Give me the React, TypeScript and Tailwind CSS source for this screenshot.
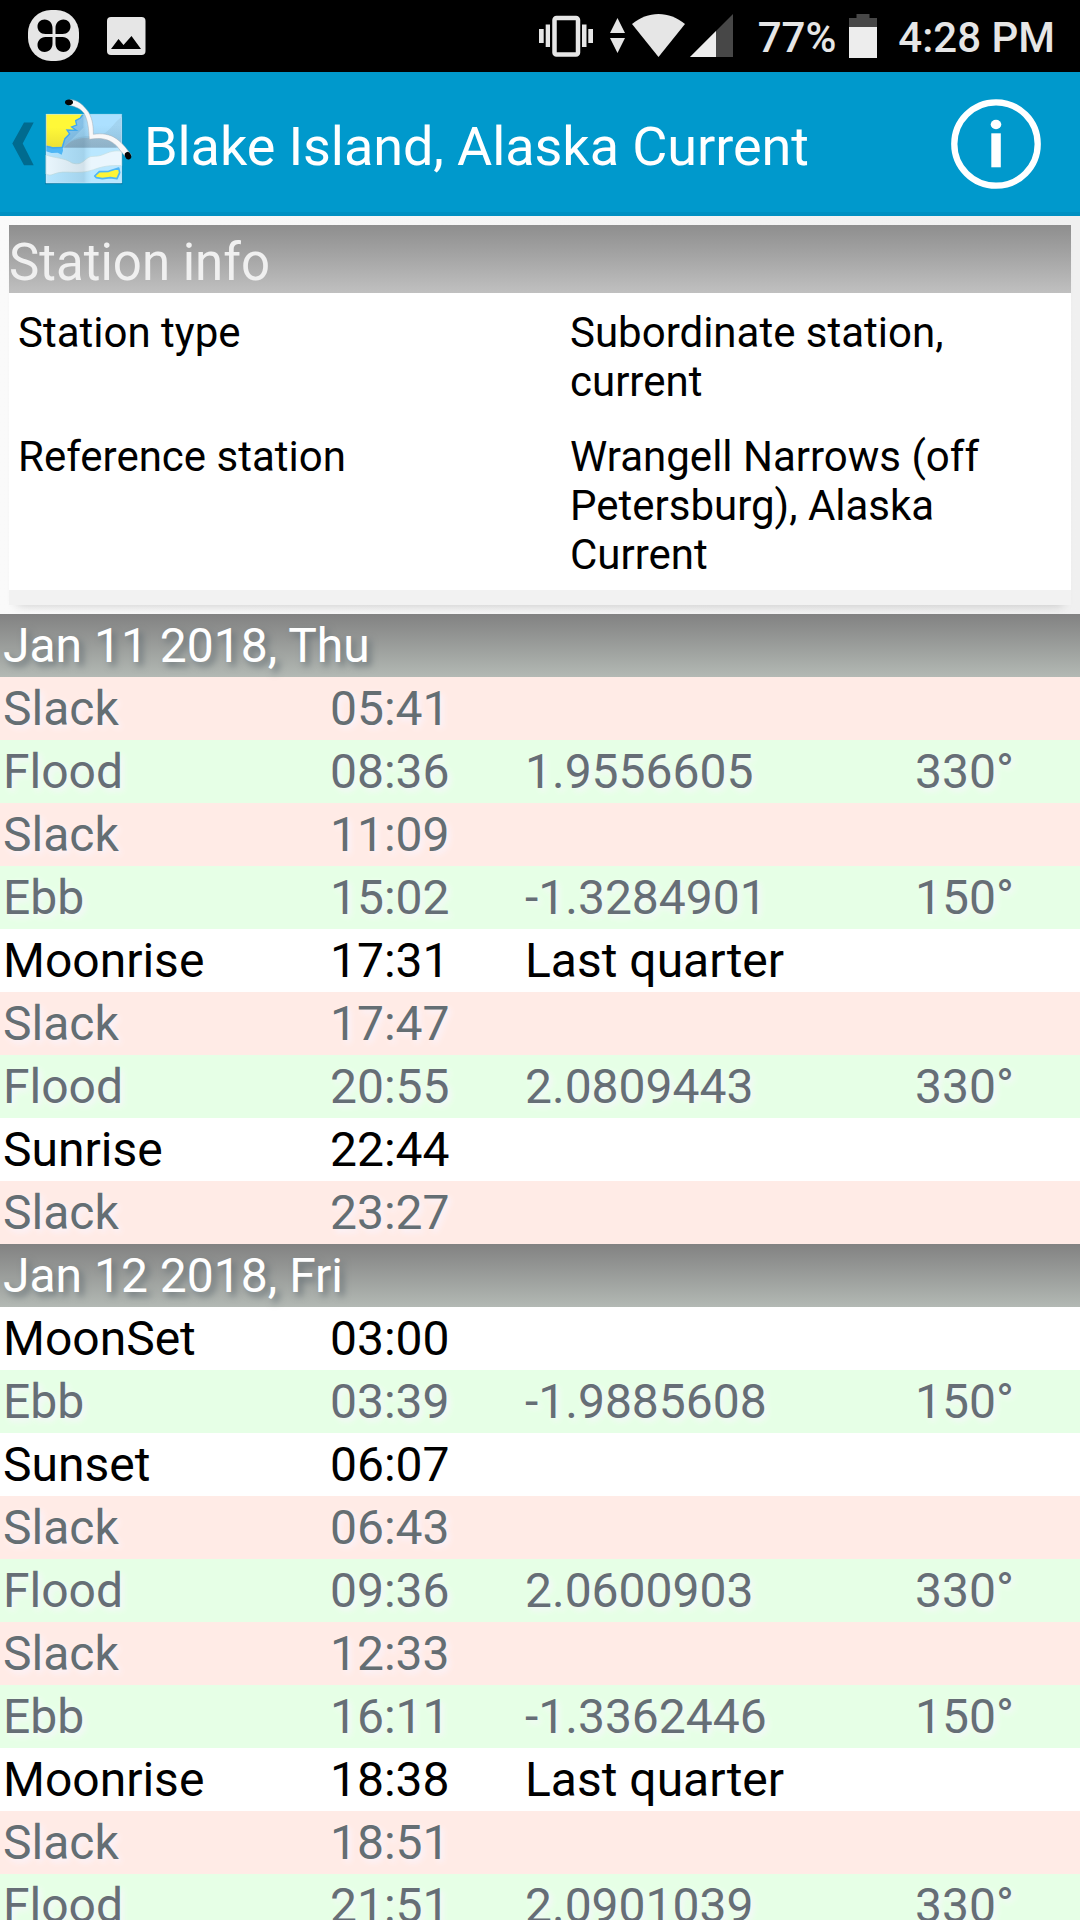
import { clsx } from "clsx";

type Kind = "slack" | "flow" | "sky";

interface TideEvent {
  name: string;
  time: string;
  kind: Kind;
  value?: string;
  direction?: string;
}

interface Day {
  date: string;
  events: TideEvent[];
}

const slack = (time: string): TideEvent => ({ name: "Slack", time, kind: "slack" });
const flood = (time: string, value: string): TideEvent => ({
  name: "Flood",
  time,
  kind: "flow",
  value,
  direction: "330°",
});
const ebb = (time: string, value: string): TideEvent => ({
  name: "Ebb",
  time,
  kind: "flow",
  value,
  direction: "150°",
});
const sky = (name: string, time: string, value?: string): TideEvent => ({
  name,
  time,
  kind: "sky",
  value,
});

const days: Day[] = [
  {
    date: "Jan 11 2018, Thu",
    events: [
      slack("05:41"),
      flood("08:36", "1.9556605"),
      slack("11:09"),
      ebb("15:02", "-1.3284901"),
      sky("Moonrise", "17:31", "Last quarter"),
      slack("17:47"),
      flood("20:55", "2.0809443"),
      sky("Sunrise", "22:44"),
      slack("23:27"),
    ],
  },
  {
    date: "Jan 12 2018, Fri",
    events: [
      sky("MoonSet", "03:00"),
      ebb("03:39", "-1.9885608"),
      sky("Sunset", "06:07"),
      slack("06:43"),
      flood("09:36", "2.0600903"),
      slack("12:33"),
      ebb("16:11", "-1.3362446"),
      sky("Moonrise", "18:38", "Last quarter"),
      slack("18:51"),
      flood("21:51", "2.0901039"),
    ],
  },
];

const stationInfo = [
  { label: "Station type", value: "Subordinate station, current" },
  {
    label: "Reference station",
    value: "Wrangell Narrows (off Petersburg), Alaska Current",
  },
];

function StatusBar() {
  return (
    <div className="flex h-[72px] items-center justify-between bg-black pr-[25px] pl-7 text-[42px] font-medium text-[#e6e6e6]">
      <div className="flex h-full items-center gap-7">
        <svg width="51" height="72" viewBox="28 0 51 72">
          <rect x="28" y="10" width="51" height="51" rx="23" fill="#e6e6e6" />
          <path
            d="M52.500 34h-7c-5 0-8-3.500-8-7.500s3-7 7-7c5 0 8 4 8 8.500zM55.500 34v-6c0-4.500 3-8.500 8-8.500 4 0 7 3 7 7s-3 7.500-8 7.500zM52.500 37v6.500c0 4.500-3 8.500-8 8.500-4 0-7-3-7-7s3-8 8-8zM55.500 37h7c5 0 8 4 8 8s-3 7-7 7c-5 0-8-4-8-8.500z"
            fill="#000"
          />
        </svg>
        <svg width="39" height="72" viewBox="107 0 39 72">
          <rect x="107" y="17" width="38.500" height="38" rx="4" fill="#e6e6e6" />
          <path d="M111 49l7.500-10 5 6 8-9 9.500 13z" fill="#000" />
        </svg>
      </div>
      <div className="flex h-full items-center">
        <svg width="196" height="72" viewBox="538 0 196 72" fill="#e6e6e6">
          <rect x="554.500" y="18" width="23.500" height="36.500" rx="2" fill="none" stroke="#e6e6e6" strokeWidth="4.500" />
          <path d="M545.700 24.500h4.300v22.500h-4.300zM539 29h4.700v14H539zM582 24.500h4.500v22.500H582zM588.300 29h4.700v14h-4.700z" />
          <path d="M617.500 18l7.500 15h-15zM610 38h15l-7.500 15z" />
          <path d="M632 24c8-6.500 17-10 26.500-10s18.500 3.500 26.500 10l-26.500 33z" />
          <path d="M733 14v43h-43z" fill="#474747" />
          <path d="M716 31v26h-26z" fill="#ededed" />
        </svg>
        <span className="ml-[24px] pt-[3px] leading-[72px]">77%</span>
        <svg className="ml-[13px]" width="28" height="72" viewBox="849 0 28 72">
          <path d="M849 27v-9h7.500v-4H869.500v4H877v9z" fill="#474747" />
          <path d="M849 27h28v31h-28z" fill="#ededed" />
        </svg>
        <span className="ml-[21px] pt-[3px] leading-[72px]">4:28 PM</span>
      </div>
    </div>
  );
}

function ChartIcon() {
  return (
    <svg width="92" height="96" viewBox="6 -3 276 288">
      <defs>
        <linearGradient id="fold" x1="0" x2="1">
          <stop offset="0" stopColor="#002840" stopOpacity="0" />
          <stop offset="0.500" stopColor="#002840" stopOpacity="0.100" />
          <stop offset="0.530" stopColor="#002840" stopOpacity="0.050" />
          <stop offset="0.600" stopColor="#fff" stopOpacity="0.040" />
        </linearGradient>
        <linearGradient id="crease" x1="0" y1="0" x2="0" y2="1">
          <stop offset="0" stopColor="#1b4a66" stopOpacity="0" />
          <stop offset="1" stopColor="#1b4a66" stopOpacity="0.140" />
        </linearGradient>
        <linearGradient id="land" x1="0" y1="0" x2="0" y2="1">
          <stop offset="0.400" stopColor="#fff838" />
          <stop offset="1" stopColor="#ece136" />
        </linearGradient>
      </defs>
      <path d="M16 60h231v208l-115-3-116 3z" fill="#004a6e" opacity="0.450" />
      <path d="M18 58h227v206H18z" fill="#a9dfff" />
      <path d="M18 58h112v40L70 158H18z" fill="#92cff7" />
      <path d="M245 66c-30 22-36 48-66 54-50 5-78 0-108 38h174z" fill="#9fd2f0" />
      <path d="M72 158c18-22 42-30 78-30l60 0 20 30z" fill="#9cb8ca" opacity="0.700" />
      <path d="M18 158h227v106H18z" fill="#b6e6ff" />
      <path
        d="M18 180c28 10 56 8 78 24 38 12 36-22 66-20 34 0 40-20 83-16v44c-34-2-58 2-84 12-50 18-86-2-122 14-8 4-14 2-21-1z"
        fill="#e9f6fd"
        stroke="#c0dde0"
        strokeWidth="2"
      />
      <path d="M18 58h227v206H18z" fill="url(#fold)" />
      <path d="M18 90h227v68H18z" fill="url(#crease)" />
      <path d="M18 155h50l1 12-4 12-12-6-18 1-17-5z" fill="#4eb6f5" />
      <path
        d="M19 58h109l-8 10-14 8 3 13-16 7 13 9-27-1 8 12-14 14-8 25-28 1-18-5z"
        fill="url(#land)"
      />
      <path
        d="M129 58l-8 11-14 8 3 13-15 6 14 10-28-1 8 12-14 14-8 26-28 2-20-5"
        fill="none"
        stroke="#43a9ec"
        strokeWidth="4"
      />
      <path
        d="M164 243l14-13 28-1 30-10 3 14-8 18-20-3-24 3-18-3z"
        fill="#fff535"
        stroke="#4eb6f5"
        strokeWidth="5"
        strokeLinejoin="round"
      />
      <path d="M18 58h227v206H18z" fill="none" stroke="#d8f0fb" strokeOpacity="0.700" strokeWidth="2" />
      {/* gull */}
      <path
        d="M90 14c20-1 40 14 56 38 13 24 14 44 14 66 24-4 50-1 69 13 22 16 34 34 45 50l-12 8c-10-6-21-24-34-38-22-20-46-24-80-18-2-32-4-58-16-78-10-14-24-20-46-25z"
        fill="#f8f8f9"
        stroke="#a4adb4"
        strokeWidth="1.500"
      />
      <ellipse cx="87" cy="22" rx="12" ry="8.500" fill="#050505" />
      <ellipse cx="264" cy="182" rx="9" ry="11.500" transform="rotate(-25 264 182)" fill="#050505" />
    </svg>
  );
}

function ActionBar() {
  return (
    <header className="flex h-36 items-center border-b-4 border-[#0090c2] bg-[#0099cc] pt-1 pr-[39px] pl-3 text-white">
      <svg width="22" height="44" viewBox="12 122 22 44">
        <path d="M24 122.500h9.700L22.700 143.500l11 21.700H24L12.300 143.500z" fill="#006b8f" />
      </svg>
      <div className="-mt-[4px] ml-2">
        <ChartIcon />
      </div>
      <h1 className="ml-[10px] grow pt-[5px] text-[54px] leading-[64px] tracking-[-0.09px]">
        Blake Island, Alaska Current
      </h1>
      <svg width="90" height="90" viewBox="0 0 90 90" fill="#fff">
        <circle cx="45" cy="45" r="41.700" fill="none" stroke="#fff" strokeWidth="6.300" />
        <ellipse cx="45" cy="25.500" rx="5.300" ry="4.700" />
        <path d="M40.300 34.300h9.500v34h-9.500z" />
      </svg>
    </header>
  );
}

function StationCard() {
  return (
    <section className="h-[398px] overflow-hidden bg-linear-to-r from-[#fafafa] to-[#f0f0f0] px-[9px] pt-[9px]">
      <div className="h-[380px] bg-[#f2f2f2] shadow-[0_8px_10px_-8px_rgba(0,0,0,0.2)]">
        <h2 className="h-[68px] bg-linear-to-b from-[#8e8e8e] to-[#c0c0c0] pt-[5px] text-[51px] leading-[66px] text-[#f0f0f0]">
          Station info
        </h2>
        <dl className="flex h-[297px] flex-col gap-[26px] bg-white pt-[15px] pl-[9px] text-[42px] leading-[49px] text-black">
          {stationInfo.map((row) => (
            <div key={row.label} className="flex">
              <dt className="w-[552px] shrink-0">{row.label}</dt>
              <dd className="w-[440px]">{row.value}</dd>
            </div>
          ))}
        </dl>
      </div>
    </section>
  );
}

function EventRow({ event }: { event: TideEvent }) {
  return (
    <div
      className={clsx(
        "grid h-[63px] grid-cols-[327px_195px_390px_1fr] pl-[3px]",
        event.kind === "slack" && "bg-[#ffebe6] text-[#646e73]",
        event.kind === "flow" && "bg-[#e6ffe6] text-[#666e76]",
        event.kind === "sky" && "bg-white text-black",
        event.kind !== "sky" && "[text-shadow:3px_3px_6px_#faf5ff]"
      )}
    >
      <span>{event.name}</span>
      <span>{event.time}</span>
      <span>{event.value}</span>
      <span>{event.direction}</span>
    </div>
  );
}

export default function App() {
  return (
    <div className="h-[1920px] w-[1080px] overflow-hidden bg-white font-['Roboto',sans-serif]">
      <StatusBar />
      <ActionBar />
      <StationCard />
      <main className="text-[48px] leading-[63px]">
        {days.map((day) => (
          <section key={day.date}>
            <h2 className="h-[63px] bg-linear-to-b from-[#828282] to-[#b3b9b4] pl-[3px] text-white [text-shadow:4px_4px_7px_#697378]">
              {day.date}
            </h2>
            {day.events.map((event) => (
              <EventRow key={event.time} event={event} />
            ))}
          </section>
        ))}
      </main>
    </div>
  );
}
